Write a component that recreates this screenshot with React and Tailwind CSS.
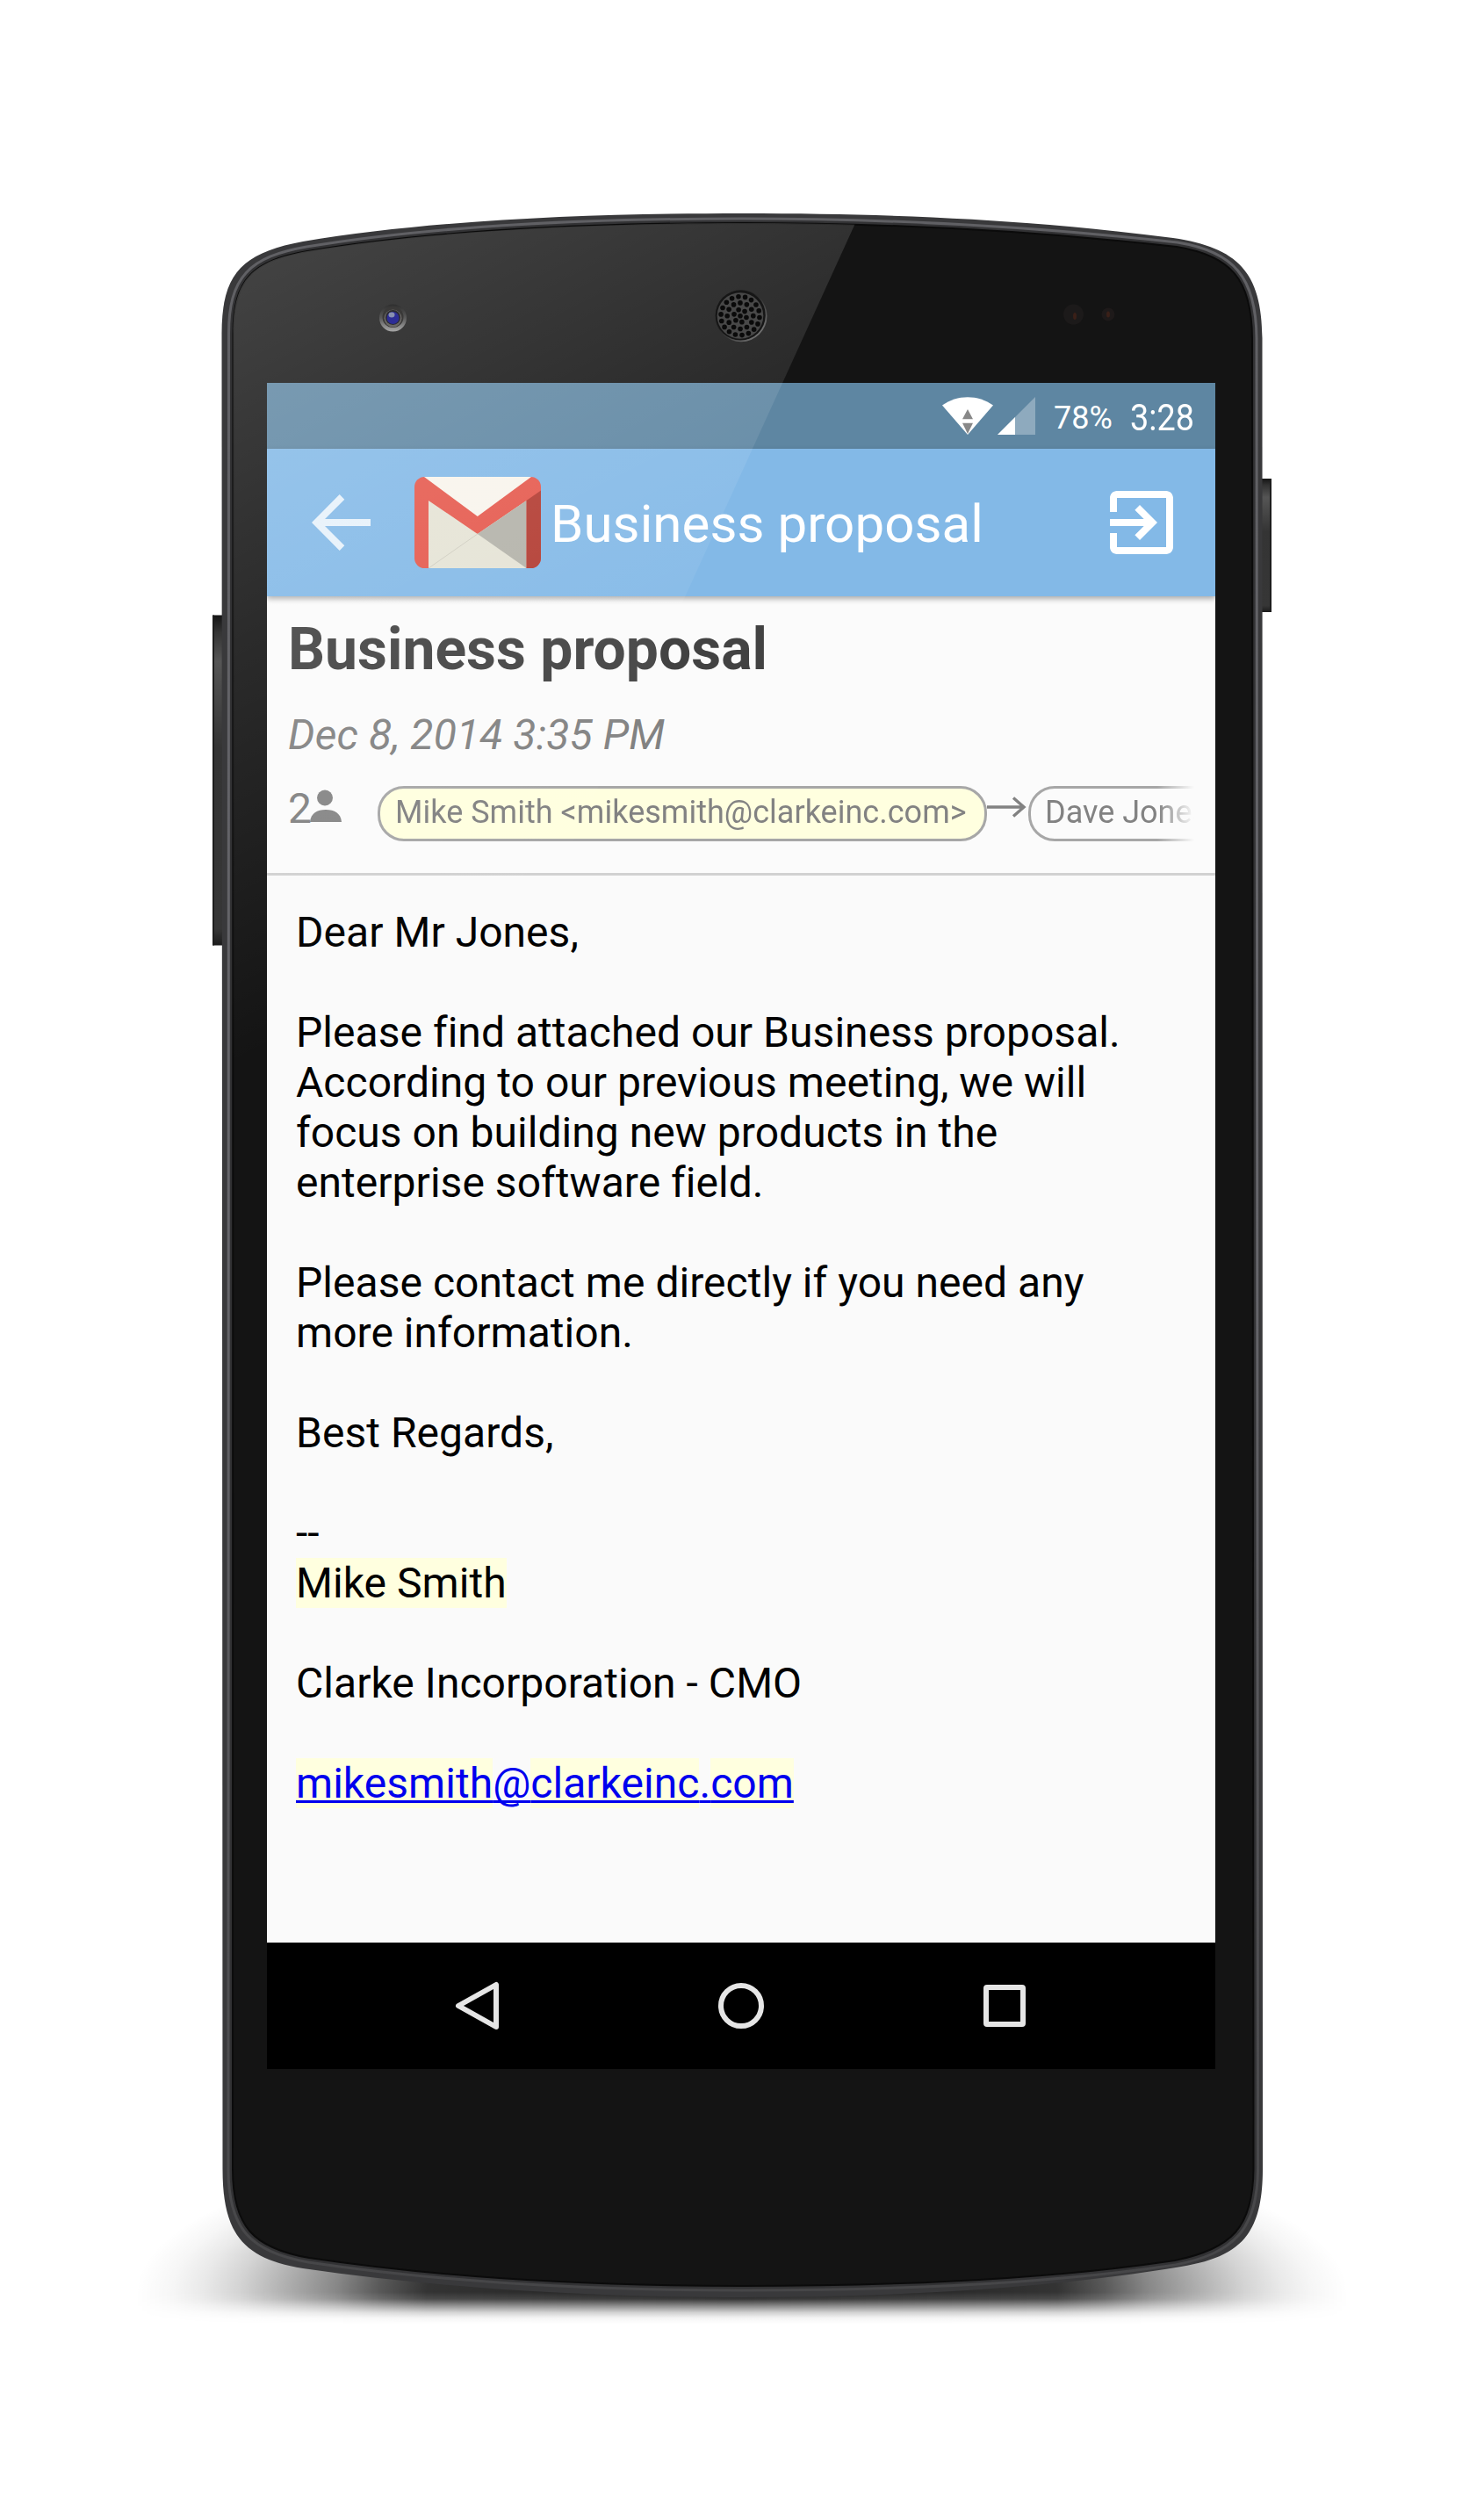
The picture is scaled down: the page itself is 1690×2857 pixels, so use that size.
import React from "react";

const OUTER =
  "M252.5 380 C252.5 312 275 288 345 275 C500 249 690 243 845 243 C1030 243 1180 251 1336 271 C1410 282 1437 310 1437.5 385 L1438 2470 C1438 2545 1412 2570 1345 2581 C1190 2607 1010 2616 845 2616 C690 2616 520 2608 345 2583 C278 2572 253.5 2545 253.5 2470 Z";
const INNER =
  "M265.5 380 C265.5 318 287 297 350 286 C500 261 690 254 845 254 C1020 254 1180 263 1340 281 C1402 291 1425.5 318 1426 385 L1427.5 2470 C1427 2537 1402 2561 1338 2574 C1190 2596 1010 2603 845 2603 C690 2603 520 2596 352 2571 C288 2560 265 2535 265 2470 Z";

const HOLES = [];
[[0, 1], [7.2, 6], [14.8, 12], [22, 18]].forEach(([r, n], ring) => {
  for (let i = 0; i < n; i++) {
    const a = (i / n) * Math.PI * 2 + ring * 0.26;
    HOLES.push([843 + r * Math.cos(a), 359.7 + r * Math.sin(a)]);
  }
});

function DeviceBody() {
  return (
    <svg className="absolute inset-0" width="1690" height="2857" viewBox="0 0 1690 2857">
      <defs>
        <radialGradient id="glow" gradientUnits="userSpaceOnUse" cx="0" cy="0" r="690" gradientTransform="translate(845 2610) scale(1 .28)">
          <stop offset="0" stopOpacity=".9" />
          <stop offset=".52" stopOpacity=".8" />
          <stop offset=".6" stopOpacity=".65" />
          <stop offset=".67" stopOpacity=".47" />
          <stop offset=".75" stopOpacity=".32" />
          <stop offset=".83" stopOpacity=".17" />
          <stop offset=".89" stopOpacity=".085" />
          <stop offset=".94" stopOpacity=".035" />
          <stop offset="1" stopOpacity="0" />
        </radialGradient>
        <linearGradient id="fall" x1="0" x2="0" y1="0" y2="1">
          <stop offset="0" stopColor="#fff" />
          <stop offset=".22" stopColor="#fff" stopOpacity=".88" />
          <stop offset=".45" stopColor="#fff" stopOpacity=".5" />
          <stop offset=".65" stopColor="#fff" stopOpacity=".2" />
          <stop offset=".82" stopColor="#fff" stopOpacity=".05" />
          <stop offset="1" stopColor="#fff" stopOpacity="0" />
        </linearGradient>
        <linearGradient id="spread" x1="155" x2="1535" y1="0" y2="0" gradientUnits="userSpaceOnUse">
          <stop offset="0" stopOpacity="0" />
          <stop offset=".03" stopOpacity=".035" />
          <stop offset=".055" stopOpacity=".085" />
          <stop offset=".085" stopOpacity=".17" />
          <stop offset=".125" stopOpacity=".32" />
          <stop offset=".165" stopOpacity=".47" />
          <stop offset=".2" stopOpacity=".65" />
          <stop offset=".24" stopOpacity=".8" />
          <stop offset=".5" stopOpacity=".9" />
          <stop offset=".76" stopOpacity=".8" />
          <stop offset=".8" stopOpacity=".65" />
          <stop offset=".835" stopOpacity=".47" />
          <stop offset=".875" stopOpacity=".32" />
          <stop offset=".915" stopOpacity=".17" />
          <stop offset=".945" stopOpacity=".085" />
          <stop offset=".97" stopOpacity=".035" />
          <stop offset="1" stopOpacity="0" />
        </linearGradient>
        <mask id="fallMask">
          <rect x="155" y="2610" width="1380" height="36" fill="url(#fall)" />
        </mask>
        <linearGradient id="rim" x1="0" x2="0" y1="0" y2="1">
          <stop offset="0" stopColor="#606064" />
          <stop offset=".5" stopColor="#66666b" />
          <stop offset="1" stopColor="#464648" />
        </linearGradient>
        <linearGradient id="key" x1="0" x2="0" y1="0" y2="1">
          <stop offset="0" stopColor="#141414" />
          <stop offset=".05" stopColor="#333" />
          <stop offset=".14" stopColor="#555" />
          <stop offset=".4" stopColor="#343434" />
          <stop offset=".95" stopColor="#363636" />
          <stop offset="1" stopColor="#1c1c1c" />
        </linearGradient>
      </defs>
      <rect x="155" y="2400" width="1380" height="210" fill="url(#glow)" />
      <rect x="155" y="2610" width="1380" height="36" fill="url(#spread)" mask="url(#fallMask)" />
      <rect x="242" y="700.5" width="14" height="376" rx="1" fill="url(#key)" />
      <rect x="242" y="700.5" width="2" height="376" fill="#1d1d1d" />
      <rect x="1434" y="545" width="14" height="152" rx="1" fill="url(#key)" />
      <rect x="1446" y="545" width="2" height="152" fill="#1d1d1d" />
      <path d={OUTER} fill="#39393b" />
      <path d={INNER} fill="none" stroke="url(#rim)" strokeWidth="13" />
      <path d={INNER} fill="none" stroke="#323234" strokeWidth="7" />
      <path d={INNER} fill="#141414" stroke="#0b0b0b" strokeWidth="2" />
    </svg>
  );
}

function Reflection() {
  return (
    <svg className="pointer-events-none absolute inset-0" width="1690" height="2857" viewBox="0 0 1690 2857">
      <defs>
        <linearGradient id="gloss" gradientUnits="userSpaceOnUse" x1="300" y1="260" x2="678" y2="1008">
          <stop offset="0" stopColor="#fff" stopOpacity=".205" />
          <stop offset=".48" stopColor="#fff" stopOpacity=".1" />
          <stop offset="1" stopColor="#fff" stopOpacity="0" />
        </linearGradient>
        <linearGradient id="lens" x1="0" x2="0" y1="0" y2="1">
          <stop offset="0" stopColor="#2e2e2e" />
          <stop offset=".5" stopColor="#5a5a5a" />
          <stop offset="1" stopColor="#a8a8a8" />
        </linearGradient>
        <linearGradient id="speakerRim" x1="0" x2="1" y1="0" y2="1">
          <stop offset=".4" stopColor="#222" />
          <stop offset="1" stopColor="#8a8a8a" />
        </linearGradient>
        <clipPath id="glass">
          <path d={INNER} />
        </clipPath>
      </defs>
      <path d="M260 240 H980.5 L260 1820 Z" fill="url(#gloss)" clipPath="url(#glass)" />
      <circle cx="447.5" cy="362" r="15.5" fill="url(#lens)" />
      <circle cx="447.5" cy="361" r="12" fill="#3a3938" />
      <circle cx="447.5" cy="362.5" r="10" fill="#6a6866" />
      <circle cx="447.5" cy="361.5" r="8.5" fill="#2b2b30" />
      <circle cx="447.5" cy="362" r="7" fill="#2d2d96" />
      <ellipse cx="446" cy="358.5" rx="3.5" ry="3" fill="#8890b0" />
      <circle cx="844" cy="359.7" r="29.5" fill="url(#speakerRim)" />
      <circle cx="843.3" cy="359" r="28.5" fill="#161616" />
      <circle cx="843" cy="359.5" r="26.3" fill="#484848" />
      {HOLES.map(([x, y], i) => (
        <circle key={i} cx={x} cy={y} r="2.8" fill="#0a0a0a" />
      ))}
      <circle cx="1222.5" cy="358" r="11.5" fill="#1c1a1a" />
      <ellipse cx="1224" cy="360" rx="2" ry="4" fill="#3a2018" />
      <circle cx="1262" cy="358" r="7.5" fill="#1e1a1a" />
      <ellipse cx="1262" cy="358" rx="2" ry="3.5" fill="#3a2018" />
    </svg>
  );
}

function StatusBar() {
  return (
    <div className="flex h-[75px] items-center justify-end bg-[#5e86a2] pr-[24px] text-white">
      <svg className="shrink-0" width="58" height="43" viewBox="0 0 58 43">
        <path d="M29 43 L0 9.5 C17 -3 41 -3 58 9.5 Z" fill="#fff" />
        <path d="M29 14 L35 25.3 H23 Z M23 29.7 H35 L29 42 Z" fill="#888" />
      </svg>
      <svg className="ml-[5px] shrink-0" width="43" height="43" viewBox="0 0 43 43">
        <path d="M43 0 V43 H0 Z" fill="#fff" fillOpacity=".3" />
        <path d="M20 23 V43 H0 Z" fill="#fff" />
      </svg>
      <span className="ml-[21px] w-[66px] pt-[4px] text-[36px] leading-none">78%</span>
      <span className="ml-[21px] w-[73px] pt-[5px] text-[42px] leading-none">
        <span className="inline-block origin-left scale-x-90">3:28</span>
      </span>
    </div>
  );
}

function AppBar() {
  return (
    <div className="relative flex h-[168px] items-center bg-[#83b9e7] pr-[36px] pl-[51px] shadow-[0_3px_6px_rgba(0,0,0,0.32)]">
      <svg className="shrink-0" width="67" height="64" viewBox="0 0 67 64">
        <path d="M0 32 L31.7 0 L37.3 5.7 L15 28 H67 V36 H15 L37.3 58.3 L31.7 64 Z" fill="#fff" fillOpacity=".8" />
      </svg>
      <svg className="ml-[50px] shrink-0" width="144" height="104" viewBox="0 0 144 104">
        <defs>
          <clipPath id="envelope">
            <rect width="144" height="104" rx="11.5" />
          </clipPath>
        </defs>
        <g clipPath="url(#envelope)">
          <rect width="144" height="104" fill="#e5584c" />
          <path d="M11 0 H133 L71.8 45 Z" fill="#f8f4ec" />
          <path d="M16 27 L71.8 65 L127.5 27 V104 H16 Z" fill="#e5e3d5" />
          <path d="M127.5 27 L71.8 65 L127.5 104 Z" fill="#b3b2a9" />
          <path d="M127.5 27 L144 15.5 V104 H127.5 Z" fill="#b23a30" />
          <path d="M16 104 L71.8 65" stroke="#cfcdc0" strokeWidth="1" />
        </g>
      </svg>
      <h1 className="ml-[11px] pt-[4px] text-[60px] leading-[70px] tracking-[0.08px] whitespace-nowrap text-white">Business proposal</h1>
      <svg className="ml-auto shrink-0" width="96" height="96" viewBox="0 0 24 24" fill="#fff">
        <path d="M10.09 15.59L11.5 17l5-5-5-5-1.41 1.41L12.67 11H3v2h9.67l-2.58 2.59zM19 3H5c-1.11 0-2 .9-2 2v4h2V5h14v14H5v-4H3v4c0 1.1.89 2 2 2h14c1.1 0 2-.9 2-2V5c0-1.1-.9-2-2-2z" />
      </svg>
    </div>
  );
}

function MessageHeader() {
  return (
    <div className="h-[318px] border-b-[3px] border-[#d1d1d1] bg-[#fbfbfb] pt-[22px] pr-[24px] pl-[24px]">
      <h2 className="text-[66px] leading-[78px] font-bold whitespace-nowrap text-[#424242]">Business proposal</h2>
      <p className="mt-[30px] text-[48px] leading-[56px] tracking-[0.12px] text-[#828282] italic">Dec 8, 2014 3:35 PM</p>
      <div className="mt-[27px] flex h-[67px] items-center text-[#828282]">
        <div className="flex w-[102px] shrink-0 items-center">
          <span className="w-[25px] pb-[10px] text-[48px] leading-[56px]">2</span>
          <svg className="mb-[16px]" width="36" height="37" viewBox="0 0 36 37">
            <circle cx="17" cy="9.5" r="9" fill="#868686" />
            <path d="M0 37 C1 27 8 23 18 23 C28 23 35 27 36 37 Z" fill="#868686" />
          </svg>
        </div>
        <div className="flex min-w-0 flex-1 items-center overflow-hidden pt-[1px] [mask-image:linear-gradient(to_right,#000_calc(100%-42px),transparent)]">
          <span className="box-border h-[63px] w-[694px] shrink-0 rounded-[30px] border-[3px] border-[#a7a7a7] bg-[#ffffdf] pl-[17px] text-[36px] leading-[54px] tracking-[0.02px] whitespace-nowrap">
            Mike Smith &lt;mikesmith@clarkeinc.com&gt;
          </span>
          <svg className="mb-[15px] w-[47px] shrink-0" width="47" height="24" viewBox="0 0 47 24" fill="none" stroke="#828282" strokeWidth="3.4">
            <path d="M0 12 H42 M30 1.5 L42 12 L30 22.5" />
          </svg>
          <span className="box-border h-[63px] w-[640px] shrink-0 rounded-[30px] border-[3px] border-[#a7a7a7] pl-[16px] text-[36px] leading-[54px] whitespace-nowrap">
            Dave Jones
          </span>
        </div>
      </div>
    </div>
  );
}

function MessageBody() {
  return (
    <div className="flex-1 bg-[#fafafa] pt-[36px] pl-[33px] text-[48px] leading-[57px] tracking-[0.04px] whitespace-pre text-black">
      <p>Dear Mr Jones,</p>
      <p className="mt-[57px]">
        Please find attached our Business proposal.
        <br />
        According to our previous meeting, we will
        <br />
        focus on building new products in the
        <br />
        enterprise software field.
      </p>
      <p className="mt-[57px]">
        Please contact me directly if you need any
        <br />
        more information.
      </p>
      <p className="mt-[57px]">Best Regards,</p>
      <p className="mt-[57px]">--</p>
      <p>
        <mark className="bg-[#ffffdf] text-black">Mike Smith</mark>
      </p>
      <p className="mt-[57px]">Clarke Incorporation - CMO</p>
      <p className="mt-[57px]">
        <a className="text-[#0000ee] underline decoration-[3px] underline-offset-[3px] [text-decoration-skip-ink:none]">
          <span className="bg-[#ffffdf]">mikesmith</span>@<span className="bg-[#ffffdf]">clarkeinc</span>.
          <span className="bg-[#ffffdf]">com</span>
        </a>
      </p>
    </div>
  );
}

function NavBar() {
  return (
    <div className="flex h-[144px] items-center bg-black pl-[214px]">
      <svg width="52" height="58" viewBox="0 0 52 58" fill="none" stroke="#e6e6e6" strokeWidth="6" strokeLinejoin="round">
        <path d="M47 5 V53 L4 29 Z" />
      </svg>
      <svg className="ml-[248px]" width="52" height="52" viewBox="0 0 52 52" fill="none" stroke="#e6e6e6" strokeWidth="6">
        <circle cx="26" cy="26" r="23" />
      </svg>
      <span className="ml-[250px] size-[48px] rounded-[4px] border-[6px] border-[#e6e6e6]" />
    </div>
  );
}

export default function App() {
  return (
    <div className="relative h-[2857px] w-[1690px] overflow-hidden bg-white pt-[436px] pl-[304px] [font-family:Roboto,sans-serif]">
      <DeviceBody />
      <div className="relative flex h-[1920px] w-[1080px] flex-col overflow-hidden">
        <StatusBar />
        <AppBar />
        <MessageHeader />
        <MessageBody />
        <NavBar />
      </div>
      <Reflection />
    </div>
  );
}
